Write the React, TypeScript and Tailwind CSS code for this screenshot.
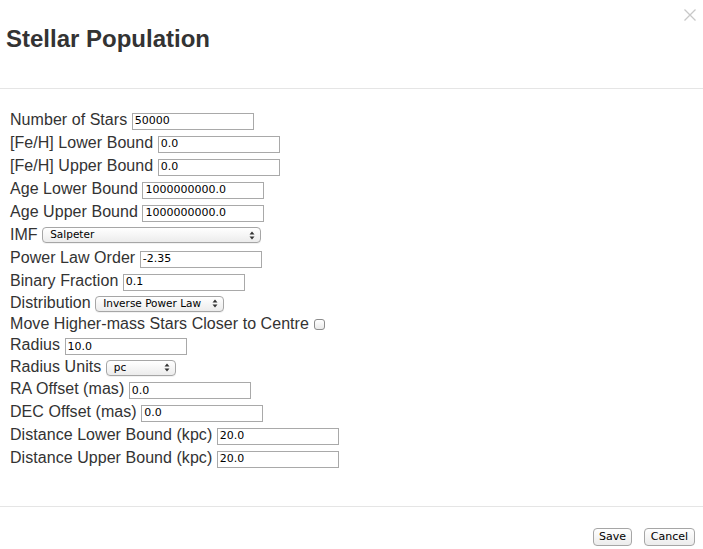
import React from 'react'

type Row =
  | { kind: 'input'; label: string; value: string; h: number }
  | { kind: 'select'; label: string; value: string; w: number; h: number }
  | { kind: 'check'; label: string; h: number }

const rows: Row[] = [
  { kind: 'input', label: 'Number of Stars', value: '50000', h: 23 },
  { kind: 'input', label: '[Fe/H] Lower Bound', value: '0.0', h: 23 },
  { kind: 'input', label: '[Fe/H] Upper Bound', value: '0.0', h: 23 },
  { kind: 'input', label: 'Age Lower Bound', value: '1000000000.0', h: 23 },
  { kind: 'input', label: 'Age Upper Bound', value: '1000000000.0', h: 23 },
  { kind: 'select', label: 'IMF', value: 'Salpeter', w: 219, h: 23 },
  { kind: 'input', label: 'Power Law Order', value: '-2.35', h: 23 },
  { kind: 'input', label: 'Binary Fraction', value: '0.1', h: 23 },
  { kind: 'select', label: 'Distribution', value: 'Inverse Power Law', w: 129, h: 22 },
  { kind: 'check', label: 'Move Higher-mass Stars Closer to Centre', h: 20 },
  { kind: 'input', label: 'Radius', value: '10.0', h: 22 },
  { kind: 'select', label: 'Radius Units', value: 'pc', w: 70, h: 22 },
  { kind: 'input', label: 'RA Offset (mas)', value: '0.0', h: 22 },
  { kind: 'input', label: 'DEC Offset (mas)', value: '0.0', h: 23 },
  { kind: 'input', label: 'Distance Lower Bound (kpc)', value: '20.0', h: 23 },
  { kind: 'input', label: 'Distance Upper Bound (kpc)', value: '20.0', h: 23 },
]

function Arrows() {
  return (
    <svg width="6" height="9" viewBox="0 0 6 9" className="shrink-0">
      <path d="M3 0.5 L5.5 3.5 H0.5 Z" fill="#333" />
      <path d="M3 8.5 L5.5 5.5 H0.5 Z" fill="#333" />
    </svg>
  )
}

function FieldRow({ row }: { row: Row }) {
  return (
    <div className="flex items-center" style={{ height: row.h }}>
      <span className="whitespace-pre tracking-[0.05px]">{row.label} </span>
      {row.kind === 'input' && (
        <div className="mt-[3px] flex h-[17px] w-[122px] items-center border border-[#a9a9a9] bg-white pl-[2px] pt-[1px] font-['DejaVu_Sans',sans-serif] text-[11px] text-black">
          {row.value}
        </div>
      )}
      {row.kind === 'select' && (
        <div
          className="mt-[1px] flex h-[16px] items-center justify-between rounded-[4px] border border-[#a6a6a6] bg-gradient-to-b from-white to-[#ececec] pl-[7px] pr-[5px] font-['DejaVu_Sans',sans-serif] text-[10.5px] text-black shadow-[0_1px_0_rgba(0,0,0,0.05)]"
          style={{ width: row.w }}
        >
          <span className="whitespace-nowrap">{row.value}</span>
          <Arrows />
        </div>
      )}
      {row.kind === 'check' && (
        <div className="ml-[1px] mt-[1px] h-[11px] w-[11px] rounded-[3px] border border-[#8c8c8c] bg-gradient-to-b from-white to-[#eaeaea]" />
      )}
    </div>
  )
}

export default function App() {
  return (
    <div className="relative h-[549px] w-[703px] bg-white font-['Liberation_Sans',Arial,sans-serif] text-[#333]">
      <div className="h-[89px] border-b border-[#e5e5e5] px-[6px] pt-[25px]">
        <h3 className="text-[24px] font-bold leading-[28px] text-[#333]">Stellar Population</h3>
      </div>
      <button className="absolute right-[5px] top-[7px] p-[1px]" aria-label="Close">
        <svg width="14" height="14" viewBox="0 0 14 14">
          <path d="M1.5 1.5 L12.5 12.5 M12.5 1.5 L1.5 12.5" stroke="#c8c8c8" strokeWidth="1.3" />
        </svg>
      </button>
      <div className="h-[417px] px-[10px] pt-[19px] text-[16px]">
        {rows.map((r) => (
          <FieldRow key={r.label} row={r} />
        ))}
      </div>
      <div className="flex h-[43px] items-center justify-end gap-[12px] border-t border-[#e5e5e5] pr-[8px] pt-[17px]">
        <button className="h-[18px] w-[39px] rounded-[4px] border border-[#a6a6a6] bg-gradient-to-b from-white to-[#ececec] font-['DejaVu_Sans',sans-serif] text-[11px] leading-none text-black">
          Save
        </button>
        <button className="h-[18px] w-[51px] rounded-[4px] border border-[#a6a6a6] bg-gradient-to-b from-white to-[#ececec] font-['DejaVu_Sans',sans-serif] text-[11px] leading-none text-black">
          Cancel
        </button>
      </div>
    </div>
  )
}
